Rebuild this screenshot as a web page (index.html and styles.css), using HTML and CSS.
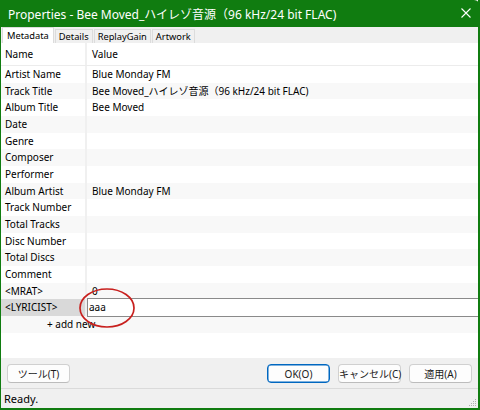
FILE: index.html
```html
<!DOCTYPE html>
<html>
<head>
<meta charset="utf-8">
<link rel="stylesheet" href="styles.css">
</head>
<body>
<div class="window">
  <div class="titlebar">
    <span class="title">Properties - Bee Moved_ハイレゾ音源（96 kHz/24 bit FLAC)</span>
    <svg class="close" width="10" height="10" viewBox="0 0 10 10"><path d="M0.5 0.5 L9.5 9.5 M9.5 0.5 L0.5 9.5" stroke="#fff" stroke-width="1.1" fill="none"/></svg>
  </div>
  <div class="tabs">
    <div class="tab active">Metadata</div>
    <div class="tab">Details</div>
    <div class="tab">ReplayGain</div>
    <div class="tab">Artwork</div>
  </div>
  <div class="list">
    <div class="row header"><div class="name">Name</div><div class="value">Value</div></div>
    <div class="row"><div class="name">Artist Name</div><div class="value">Blue Monday FM</div></div>
    <div class="row alt"><div class="name">Track Title</div><div class="value">Bee Moved_ハイレゾ音源（96 kHz/24 bit FLAC)</div></div>
    <div class="row"><div class="name">Album Title</div><div class="value">Bee Moved</div></div>
    <div class="row alt"><div class="name">Date</div><div class="value"></div></div>
    <div class="row"><div class="name">Genre</div><div class="value"></div></div>
    <div class="row alt"><div class="name">Composer</div><div class="value"></div></div>
    <div class="row"><div class="name">Performer</div><div class="value"></div></div>
    <div class="row alt"><div class="name">Album Artist</div><div class="value">Blue Monday FM</div></div>
    <div class="row"><div class="name">Track Number</div><div class="value"></div></div>
    <div class="row alt"><div class="name">Total Tracks</div><div class="value"></div></div>
    <div class="row"><div class="name">Disc Number</div><div class="value"></div></div>
    <div class="row alt"><div class="name">Total Discs</div><div class="value"></div></div>
    <div class="row"><div class="name">Comment</div><div class="value"></div></div>
    <div class="row alt"><div class="name">&lt;MRAT&gt;</div><div class="value">0</div></div>
    <div class="row editing"><div class="name sel">&lt;LYRICIST&gt;</div><div class="value"><div class="edit">aaa</div></div></div>
    <div class="row alt addrow"><div class="add">+ add new</div></div>
    <svg class="mark" width="60" height="42" viewBox="0 0 60 42"><ellipse cx="30" cy="21" rx="27" ry="19" fill="none" stroke="#c8201e" stroke-width="1.7"/></svg>
  </div>
  <div class="buttonbar">
    <button class="btn">ツール(T)</button>
    <div class="spacer"></div>
    <button class="btn default">OK(O)</button>
    <button class="btn">キャンセル(C)</button>
    <button class="btn">適用(A)</button>
  </div>
  <div class="status">
    <span>Ready.</span>
    <svg class="grip" width="8" height="8" viewBox="0 0 8 8" fill="#b0b0b0"><rect x="6" y="0" width="1" height="1"/><rect x="4" y="2" width="1" height="1"/><rect x="6" y="2" width="1" height="1"/><rect x="2" y="4" width="1" height="1"/><rect x="4" y="4" width="1" height="1"/><rect x="6" y="4" width="1" height="1"/><rect x="0" y="6" width="1" height="1"/><rect x="2" y="6" width="1" height="1"/><rect x="4" y="6" width="1" height="1"/><rect x="6" y="6" width="1" height="1"/></svg>
  </div>
</div>
</body>
</html>
```
FILE: styles.css
```css
html, body {
  margin: 0;
  padding: 0;
}
body {
  width: 480px;
  height: 410px;
  overflow: hidden;
  font-family: "Noto Sans", "Noto Sans CJK JP", sans-serif;
  font-size: 10px;
  color: #000;
}
.window {
  box-sizing: border-box;
  width: 480px;
  height: 410px;
  border: 1px solid #107c10;
  border-top: none;
  border-right-width: 2px;
  border-bottom-width: 2px;
  display: flex;
  flex-direction: column;
  background: #f0f0f0;
}
.titlebar {
  height: 27px;
  flex: none;
  background: #107c10;
  color: #fff;
  display: flex;
  align-items: center;
  justify-content: space-between;
  padding: 0 9px 0 8px;
  margin: 0 -2px 0 -1px;
  border-top-right-radius: 6px;
  font-size: 12px;
}
.close {
  margin-top: -1px;
}
.tabs {
  height: 16px;
  flex: none;
  display: flex;
  align-items: flex-end;
  padding-left: 1px;
  gap: 1px;
  font-size: 9.3px;
}
.tab {
  padding: 0 3px;
  border: 1px solid #dcdcdc;
  border-bottom: none;
  box-sizing: content-box;
  height: 13px;
  line-height: 13px;
  color: #000;
}
.tab.active {
  background: #fff;
  height: 15px;
  line-height: 15px;
  padding: 0 4px;
}
.list {
  flex: 1;
  background: #fff;
  position: relative;
  overflow: hidden;
}
.row {
  display: flex;
  height: 16.67px;
  line-height: 16.67px;
}
.row.header {
  height: 23px;
  line-height: 22px;
  border-bottom: 1px solid #ececec;
  box-sizing: border-box;
}
.row.alt {
  background: #f8f8f8;
}
.name {
  width: 86px;
  flex: none;
  padding-left: 4px;
  box-sizing: border-box;
  border-right: 2px solid #f0f0f0;
  white-space: nowrap;
}
.value {
  flex: 1;
  padding-left: 5px;
  white-space: nowrap;
  overflow: hidden;
}
.name.sel {
  background: #d9d9d9;
}
.row.editing .value {
  padding-left: 0;
  overflow: visible;
}
.edit {
  box-sizing: border-box;
  height: 19px;
  line-height: 17px;
  margin-top: -1px;
  border: 1px solid #8a8a8a;
  border-right: none;
  background: #fff;
  padding-left: 1px;
  position: relative;
}
.add {
  padding-left: 46px;
  white-space: nowrap;
}
.mark {
  position: absolute;
  left: 76px;
  top: 244px;
}
.buttonbar {
  height: 30px;
  flex: none;
  display: flex;
  align-items: flex-start;
  padding: 6px 6px 0 6px;
  gap: 8px;
  box-sizing: border-box;
}
.spacer {
  flex: 1;
}
.btn {
  width: 63px;
  height: 19px;
  padding: 0;
  font-family: inherit;
  font-size: 10px;
  white-space: nowrap;
  background: #fdfdfd;
  border: 1px solid #d0d0d0;
  border-bottom-color: #bcbcbc;
  border-radius: 4px;
  color: #1a1a1a;
}
.btn.default {
  border: 1px solid #0067c0;
  box-shadow: inset 0 0 0 0.5px #0067c0;
}
.status {
  height: 19px;
  flex: none;
  border-top: 1px solid #dadada;
  display: flex;
  align-items: center;
  justify-content: space-between;
  padding-left: 3px;
  padding-right: 1px;
  position: relative;
  font-size: 11px;
}
.grip {
  align-self: flex-end;
  margin-bottom: 1px;
}
```
